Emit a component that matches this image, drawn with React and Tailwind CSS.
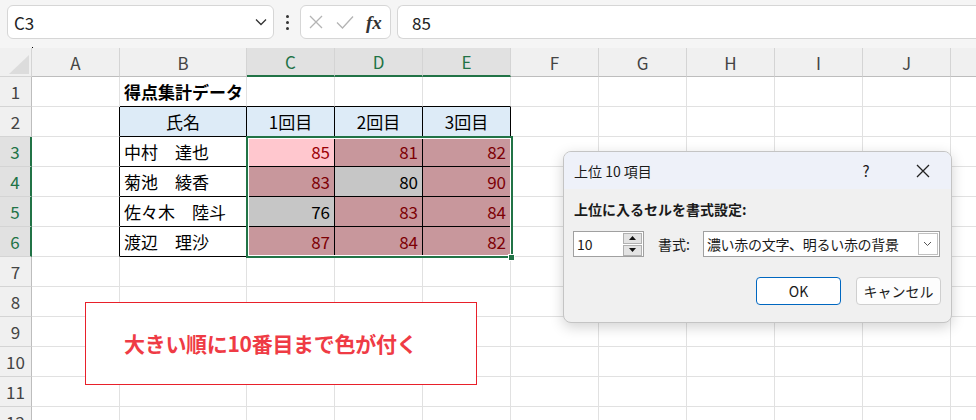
import React from "react";

const cols = ["A", "B", "C", "D", "E", "F", "G", "H", "I", "J", ""];
const names = ["中村　達也", "菊池　綾香", "佐々木　陸斗", "渡辺　理沙"];
const scores = [
  [85, 81, 82],
  [83, 80, 90],
  [76, 83, 84],
  [87, 84, 82],
];
const heads = ["氏名", "1回目", "2回目", "3回目"];

// top 10 values get the red style
const sorted = scores.flat().sort((a, b) => b - a);
const cutoff = sorted[9];

function Cell({ r, c }) {
  const inTable = r >= 2 && r <= 6 && c >= 1 && c <= 4;
  const blackRight = inTable || (c === 0 && r >= 2 && r <= 6);
  const blackBottom = inTable || (r === 1 && c >= 1 && c <= 4);
  let bg = "bg-white";
  let text = "text-black";
  let align = "justify-start pl-[4px]";
  let content = null;
  let weight = "";

  if (r === 1 && c === 1) {
    content = "得点集計データ";
    weight = "font-bold";
  }
  if (r === 2 && inTable) {
    bg = "bg-[#ddebf7]";
    align = "justify-center";
    content = heads[c - 1];
  }
  if (r >= 3 && r <= 6 && c === 1) content = names[r - 3];
  if (r >= 3 && r <= 6 && c >= 2 && c <= 4) {
    const v = scores[r - 3][c - 2];
    const top = v >= cutoff;
    const active = r === 3 && c === 2;
    content = v;
    align = "justify-end pr-[4px]";
    if (active) {
      bg = "bg-[#ffc7ce]";
      text = "text-[#9c0006]";
    } else if (top) {
      bg = "bg-[#c8979c]";
      text = "text-[#7d0005]";
    } else {
      bg = "bg-[#c6c6c6]";
      text = "text-black";
    }
  }

  return (
    <div
      className={`h-[30px] flex items-center border-r border-b leading-none text-[17px] whitespace-nowrap overflow-visible ${bg} ${text} ${align} ${weight} ${
        blackRight ? "border-r-black" : "border-r-[#e1e1e1]"
      } ${blackBottom ? "border-b-black" : "border-b-[#e1e1e1]"}`}
    >
      {content}
    </div>
  );
}

function TopBar() {
  return (
    <div className="h-[48px] bg-[#f5f5f5] flex items-start pt-[5px] pl-[7px]">
      <div className="w-[267px] h-[34px] bg-white border border-[#d6d6d6] rounded-[6px] flex items-center justify-between pl-[6px] pr-[6px]">
        <span className="text-[17px] text-[#222] leading-none">C3</span>
        <svg width="12" height="8" viewBox="0 0 12 8">
          <path d="M1 1.5 L6 6.5 L11 1.5" fill="none" stroke="#333" strokeWidth="1.3" />
        </svg>
      </div>
      <div className="w-[26px] h-[34px] flex flex-col items-center justify-center gap-[3px]">
        <span className="w-[3px] h-[3px] bg-[#333] rounded-full" />
        <span className="w-[3px] h-[3px] bg-[#333] rounded-full" />
        <span className="w-[3px] h-[3px] bg-[#333] rounded-full" />
      </div>
      <div className="w-[91px] h-[34px] bg-white border border-[#d6d6d6] rounded-[6px] flex items-center pl-[7px] gap-[12px]">
        <svg width="16" height="16" viewBox="0 0 16 16">
          <path d="M2 2 L14 14 M14 2 L2 14" stroke="#b4b4b4" strokeWidth="1.3" />
        </svg>
        <svg width="18" height="16" viewBox="0 0 18 16">
          <path d="M1 8.5 L6.5 14 L17 2.5" fill="none" stroke="#b4b4b4" strokeWidth="1.3" />
        </svg>
        <span className="font-['Liberation_Serif',serif] italic font-bold text-[19px] text-[#333] leading-none">
          fx
        </span>
      </div>
      <div className="ml-[6px] flex-1 h-[34px] bg-white border border-[#d6d6d6] border-r-0 rounded-l-[6px] flex items-center pl-[14px]">
        <span className="text-[17px] text-[#222] leading-none">85</span>
      </div>
    </div>
  );
}

function Sheet() {
  return (
    <div className="grid grid-cols-[32px_88px_127px_88px_88px_88px_88px_88px_88px_88px_88px_88px]">
      <div className="h-[29px] bg-[#f0f0f0] border-r border-b border-[#d4d4d4] flex items-end justify-end">
        <svg width="28" height="24" viewBox="0 0 28 24">
          <path d="M26 3 L26 22 L6 22 Z" fill="#dcdcdc" />
        </svg>
      </div>
      {cols.map((l, i) => {
        const sel = i >= 2 && i <= 4;
        return (
          <div
            key={i}
            className={`h-[29px] flex items-center justify-center border-r border-r-[#d4d4d4] text-[17px] leading-none ${
              sel
                ? "bg-[#e1e1e1] text-[#217346] border-b-2 border-b-[#217346]"
                : "bg-[#f0f0f0] text-[#444] border-b border-b-[#bdbdbd]"
            }`}
          >
            {l}
          </div>
        );
      })}
      {Array.from({ length: 12 }, (_, k) => k + 1).map((r) => {
        const sel = r >= 3 && r <= 6;
        return (
          <React.Fragment key={r}>
            <div
              className={`h-[30px] flex items-center justify-center border-b border-b-[#d4d4d4] text-[17px] leading-none ${
                sel
                  ? "bg-[#e1e1e1] text-[#217346] border-r-2 border-r-[#217346]"
                  : "bg-[#f0f0f0] text-[#444] border-r border-r-[#bdbdbd]"
              }`}
            >
              {r}
            </div>
            {cols.map((l, c) => (
              <Cell key={c} r={r} c={c} />
            ))}
          </React.Fragment>
        );
      })}
    </div>
  );
}

function Dialog() {
  return (
    <div className="absolute left-[563px] top-[151px] w-[389px] h-[172px] rounded-[8px] border border-[#c4c4c4] bg-[#f0f0f0] shadow-[0_4px_14px_rgba(0,0,0,0.18)] overflow-hidden text-[#1a1a1a]">
      <div className="h-[37px] bg-[#eef1f9] flex items-center pl-[10px]">
        <span className="text-[14px] leading-none">上位 10 項目</span>
        <span className="ml-auto w-[20px] text-center text-[15px] leading-none">?</span>
        <span className="ml-[37px] mr-[18px] w-[20px] flex justify-center">
          <svg width="14" height="14" viewBox="0 0 14 14">
            <path d="M1 1 L13 13 M13 1 L1 13" stroke="#222" strokeWidth="1.3" />
          </svg>
        </span>
      </div>
      <div className="px-[9px] pt-[13px]">
        <div className="text-[14px] font-bold leading-none pl-[1px]">上位に入るセルを書式設定:</div>
        <div className="mt-[15px] flex items-center">
          <div className="w-[71px] h-[26px] bg-white border border-[#a0a0a0] flex items-center justify-between pl-[3px] pr-[1px]">
            <span className="text-[14px] leading-none">10</span>
            <div className="flex flex-col gap-px">
              <div className="w-[19px] h-[11px] bg-[#e3e3e3] border border-[#b0b0b0] flex items-center justify-center">
                <svg width="7" height="4" viewBox="0 0 7 4">
                  <path d="M0 4 L3.5 0 L7 4 Z" fill="#111" />
                </svg>
              </div>
              <div className="w-[19px] h-[11px] bg-[#e3e3e3] border border-[#b0b0b0] flex items-center justify-center">
                <svg width="7" height="4" viewBox="0 0 7 4">
                  <path d="M0 0 L3.5 4 L7 0 Z" fill="#111" />
                </svg>
              </div>
            </div>
          </div>
          <span className="ml-[14px] text-[14px] leading-none">書式:</span>
          <div className="ml-[13px] w-[237px] h-[26px] bg-white border border-[#a0a0a0] flex items-center pl-[3px] pr-[1px]">
            <span className="text-[14px] leading-none tracking-[-0.3px]">濃い赤の文字、明るい赤の背景</span>
            <div className="ml-auto w-[20px] h-[22px] border border-[#c0c0c0] bg-white flex items-center justify-center">
              <svg width="9" height="6" viewBox="0 0 9 6">
                <path d="M1 1 L4.5 4.5 L8 1" fill="none" stroke="#555" strokeWidth="1" />
              </svg>
            </div>
          </div>
        </div>
        <div className="mt-[20px] flex justify-end pr-[1px] gap-[15px]">
          <button className="w-[85px] h-[28px] bg-white border-[1.5px] border-[#0067c0] rounded-[4px] text-[14px] leading-none">
            OK
          </button>
          <button className="w-[85px] h-[28px] bg-[#fdfdfd] border border-[#cfcfcf] rounded-[4px] text-[14px] leading-none">
            キャンセル
          </button>
        </div>
      </div>
    </div>
  );
}

export default function App() {
  return (
    <div className="relative w-[976px] h-[420px] overflow-hidden bg-white font-['Noto_Sans_CJK_JP','Noto_Sans',sans-serif]">
      <TopBar />
      <Sheet />

      {/* selection C3:E6 */}
      <div className="absolute left-[246px] top-[136px] w-[267px] h-[122px] border-2 border-[#217346]">
        <div className="w-full h-full border border-white" />
      </div>
      <div className="absolute left-[508px] top-[254px] w-[7px] h-[7px] bg-[#217346] border border-white" />
      <div className="absolute left-[32px] top-[47px] w-px h-px bg-black" />

      {/* note box */}
      <div className="absolute left-[85px] top-[302px] w-[392px] h-[83px] bg-white border border-[#e8202a] flex items-center pl-[38px]">
        <span className="text-[21px] font-semibold text-[#ef3b45] leading-none tracking-[-0.3px]">
          大きい順に10番目まで色が付く
        </span>
      </div>

      <Dialog />
    </div>
  );
}
